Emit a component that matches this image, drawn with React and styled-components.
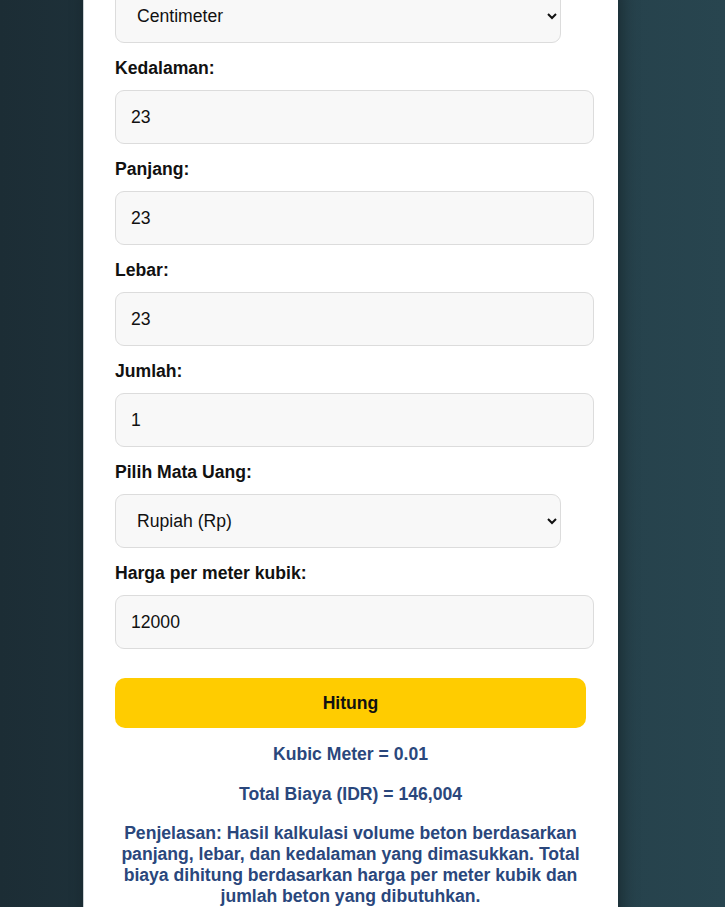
import styled, { createGlobalStyle } from "styled-components";

const GlobalStyle = createGlobalStyle`
  html, body {
    margin: 0;
    padding: 0;
  }
  body {
    font-family: "Liberation Sans", Arial, sans-serif;
    background: linear-gradient(to right, #1c2d35 0%, #223b45 50%, #28454f 100%);
    min-height: 907px;
    overflow: hidden;
  }
`;

const Page = styled.div`
  display: flex;
  justify-content: flex-start;
  padding-left: 83px;
  margin-top: -11px;
`;

const Card = styled.div`
  width: 535px;
  box-sizing: border-box;
  background: #fff;
  padding: 0 24px 40px 31px;
  min-height: 940px;
  border-left: 1px solid #c9d0d3;
  box-shadow: 4px 0 16px rgba(0, 0, 0, 0.35);
`;

const Label = styled.label`
  display: block;
  font-size: 17.6px;
  font-weight: bold;
  line-height: 20px;
  color: #111;
  margin: 15px 0 12px;
`;

const fieldBase = `
  display: block;
  box-sizing: border-box;
  height: 54px;
  border: 1px solid #dcdcdc;
  border-radius: 9px;
  background-color: #f8f8f8;
  font-family: "Liberation Sans", Arial, sans-serif;
  font-size: 17.6px;
  color: #111;
  outline: none;
`;

const Input = styled.input`
  ${fieldBase}
  width: 479px;
  padding: 0 15px;
`;

const Select = styled.select`
  ${fieldBase}
  width: 446px;
  padding: 0 15px 0 17px;
`;

const Button = styled.button`
  display: block;
  width: 471px;
  height: 50px;
  margin-top: 29px;
  border: none;
  border-radius: 10px;
  background: #ffcc00;
  font-family: "Liberation Sans", Arial, sans-serif;
  font-size: 17.6px;
  font-weight: bold;
  color: #111;
  cursor: pointer;
`;

const Results = styled.div`
  width: 471px;
`;

const Result = styled.p`
  margin: ${(p) => p.$top}px 0 0;
  text-align: center;
  font-size: 17.6px;
  font-weight: bold;
  line-height: 21px;
  color: #2a477c;
`;

const fields = [
  { label: "Kedalaman:", value: "23" },
  { label: "Panjang:", value: "23" },
  { label: "Lebar:", value: "23" },
  { label: "Jumlah:", value: "1" },
];

export default function App() {
  return (
    <>
      <GlobalStyle />
      <Page>
        <Card>
          <Select defaultValue="cm">
            <option value="cm">Centimeter</option>
            <option value="m">Meter</option>
          </Select>

          {fields.map((f) => (
            <div key={f.label}>
              <Label>{f.label}</Label>
              <Input type="text" defaultValue={f.value} />
            </div>
          ))}

          <Label>Pilih Mata Uang:</Label>
          <Select defaultValue="idr">
            <option value="idr">Rupiah (Rp)</option>
            <option value="usd">Dollar ($)</option>
          </Select>

          <Label>Harga per meter kubik:</Label>
          <Input type="text" defaultValue="12000" />

          <Button>Hitung</Button>

          <Results>
            <Result $top={16}>Kubic Meter = 0.01</Result>
            <Result $top={19}>Total Biaya (IDR) = 146,004</Result>
            <Result $top={18}>
              Penjelasan: Hasil kalkulasi volume beton berdasarkan panjang,
              lebar, dan kedalaman yang dimasukkan. Total biaya dihitung
              berdasarkan harga per meter kubik dan jumlah beton yang
              dibutuhkan.
            </Result>
          </Results>
        </Card>
      </Page>
    </>
  );
}
